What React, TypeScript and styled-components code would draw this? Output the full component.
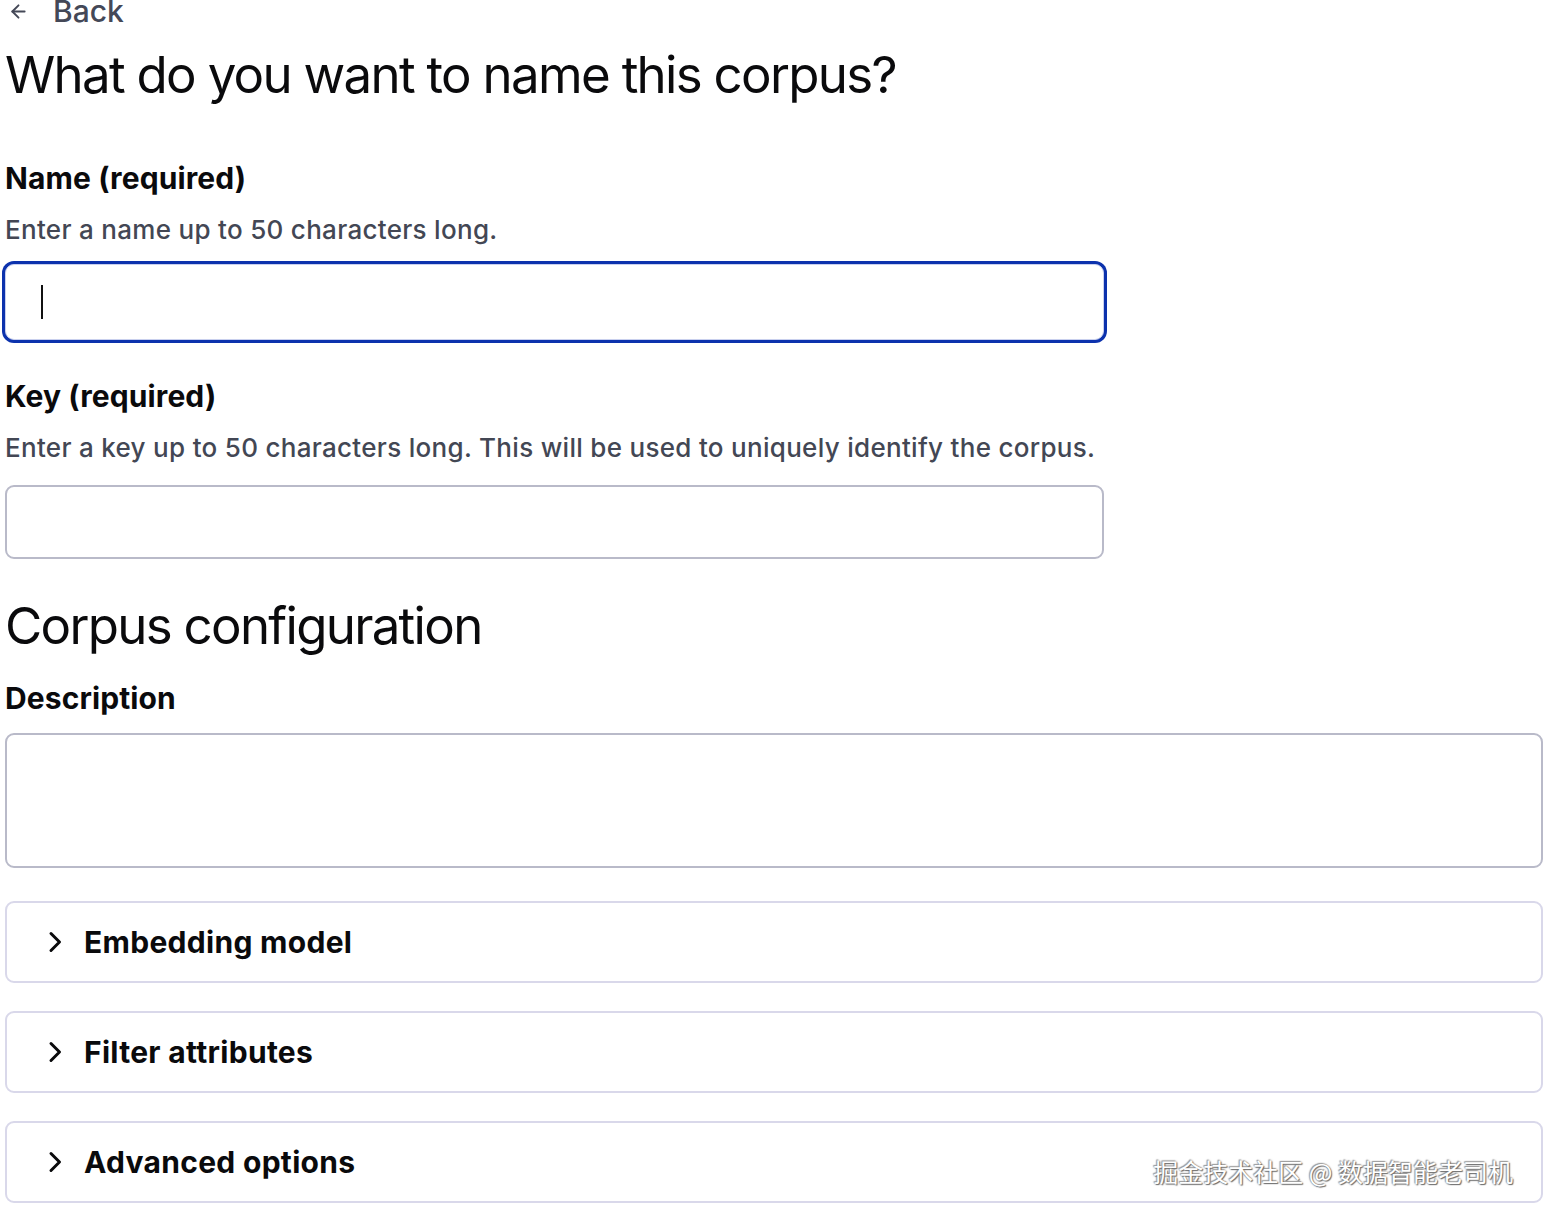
import React from "react";
import styled, { createGlobalStyle } from "styled-components";

const GlobalStyle = createGlobalStyle`
  html, body {
    margin: 0;
    padding: 0;
    background: #ffffff;
  }
  body {
    font-family: Inter, "Noto Sans", "Liberation Sans", sans-serif;
    color: #0b0b0d;
    -webkit-font-smoothing: antialiased;
  }
  * {
    box-sizing: border-box;
  }
`;

const Page = styled.main`
  position: relative;
  display: flex;
  flex-direction: column;
  padding: 0 1px 0 5px;
  min-height: 1216px;
  overflow: hidden;
`;

const BackLink = styled.a`
  display: flex;
  align-items: center;
  gap: 24px;
  margin: -4px 0 0 3px;
  height: 30px;
  font-size: 30px;
  line-height: 30px;
  font-weight: 500;
  color: #444857;
  text-decoration: none;
  cursor: pointer;

  svg {
    flex: none;
  }
`;

const Title = styled.h1<{ $gap: number }>`
  margin: ${(p) => p.$gap}px 0 0;
  font-size: 51px;
  line-height: 60px;
  font-weight: 400;
  letter-spacing: -1.7px;
  color: #0a0a0c;
`;

const Label = styled.label<{ $gap: number }>`
  display: block;
  margin-top: ${(p) => p.$gap}px;
  font-size: 30px;
  line-height: 36px;
  font-weight: 700;
  letter-spacing: 0.1px;
  color: #0a0a0c;
`;

const Help = styled.p`
  margin: 18px 0 0;
  font-size: 26px;
  line-height: 32px;
  font-weight: 500;
  color: #434754;
  letter-spacing: 0.3px;
`;

const TextInput = styled.input`
  display: block;
  width: 1099px;
  height: 74px;
  margin-top: 21px;
  padding: 0 34px;
  font: inherit;
  font-size: 28px;
  border-radius: 9px;
  background: #fff;
  border: 2px solid #b9bac9;
  outline: none;
`;

const Caret = styled.span`
  display: block;
  width: 2px;
  height: 34px;
  background: #111;
`;

const FocusedField = styled.div`
  display: flex;
  align-items: center;
  width: 1099px;
  height: 76px;
  margin-top: 18px;
  padding-left: 35px;
  border-radius: 9px;
  border: 1px solid #c9d0ee;
  box-shadow: 0 0 0 3px #0c32ad;
  background: #fff;
`;

const TextArea = styled.textarea`
  display: block;
  width: 100%;
  height: 135px;
  margin-top: 17px;
  padding: 16px 24px;
  font: inherit;
  font-size: 26px;
  border: 2px solid #b9bac9;
  border-radius: 9px;
  resize: none;
  outline: none;
`;

const AccordionList = styled.div`
  display: flex;
  flex-direction: column;
  gap: 28px;
  margin-top: 33px;
`;

const AccordionItem = styled.button`
  display: flex;
  align-items: center;
  gap: 21px;
  width: 100%;
  height: 82px;
  padding: 0 0 0 40px;
  background: #fff;
  border: 2px solid #d9d8ea;
  border-radius: 9px;
  font: inherit;
  font-size: 30px;
  font-weight: 700;
  letter-spacing: 0.3px;
  color: #0a0a0c;
  text-align: left;
  cursor: pointer;
`;

const Watermark = styled.div`
  position: absolute;
  right: 31px;
  top: 1153px;
  font-family: "Noto Sans CJK SC", sans-serif;
  font-size: 25px;
  line-height: 36px;
  color: #ffffff;
  text-shadow: 1px 1px 1px #6c6c6c, -1px -1px 1px #9a9a9a, 0 0 2px #777;
  pointer-events: none;
`;

const ArrowLeft = () => (
  <svg width="21" height="21" viewBox="0 0 24 24" fill="none" stroke="#444857" strokeWidth="2.2" strokeLinecap="round" strokeLinejoin="round">
    <path d="M19 12H5" />
    <path d="m12 19-7-7 7-7" />
  </svg>
);

const Chevron = () => (
  <svg width="16" height="22" viewBox="0 0 16 22" fill="none" stroke="#0a0a0c" strokeWidth="3" strokeLinecap="round" strokeLinejoin="round">
    <path d="M4 2.5 12.5 11 4 19.5" />
  </svg>
);

const sections = ["Embedding model", "Filter attributes", "Advanced options"];

export default function App() {
  return (
    <>
      <GlobalStyle />
      <Page>
        <BackLink>
          <ArrowLeft />
          Back
        </BackLink>

        <Title $gap={19}>What do you want to name this corpus?</Title>

        <Label $gap={55}>Name (required)</Label>
        <Help>Enter a name up to 50 characters long.</Help>
        <FocusedField>
          <Caret />
        </FocusedField>

        <Label $gap={38}>Key (required)</Label>
        <Help>
          Enter a key up to 50 characters long. This will be used to uniquely identify the corpus.
        </Help>
        <TextInput />

        <Title $gap={37}>Corpus configuration</Title>

        <Label $gap={24}>Description</Label>
        <TextArea />

        <AccordionList>
          {sections.map((s) => (
            <AccordionItem key={s}>
              <Chevron />
              {s}
            </AccordionItem>
          ))}
        </AccordionList>

        <Watermark>掘金技术社区 @ 数据智能老司机</Watermark>
      </Page>
    </>
  );
}
